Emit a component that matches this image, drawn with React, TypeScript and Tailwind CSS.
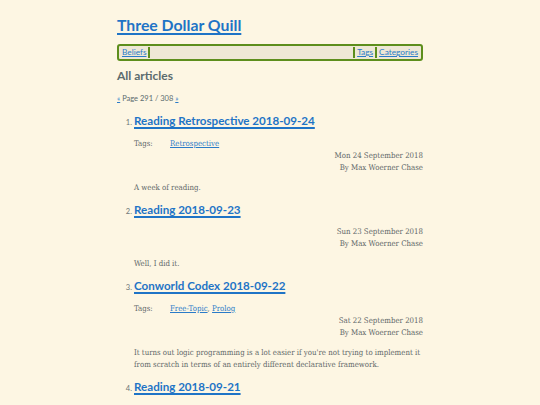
import React from "react";

const head = { fontFamily: "Lato, 'Open Sans', sans-serif" };
const body = { fontFamily: "'DejaVu Serif', 'Liberation Serif', serif" };

type Item = {
  n: number;
  title: string;
  tags?: string[];
  date?: string;
  text: string[];
};

const items: Item[] = [
  { n: 1, title: "Reading Retrospective 2018-09-24", tags: ["Retrospective"], date: "Mon 24 September 2018", text: ["A week of reading."] },
  { n: 2, title: "Reading 2018-09-23", date: "Sun 23 September 2018", text: ["Well, I did it."] },
  {
    n: 3,
    title: "Conworld Codex 2018-09-22",
    tags: ["Free-Topic", "Prolog"],
    date: "Sat 22 September 2018",
    text: [
      "It turns out logic programming is a lot easier if you're not trying to implement it",
      "from scratch in terms of an entirely different declarative framework.",
    ],
  },
  { n: 4, title: "Reading 2018-09-21", text: [] },
];

export default function App() {
  return (
    <div className="h-[405px] w-full bg-[#fdf6e3] overflow-hidden">
      <div className="w-[306px] mx-auto pt-[14px]">
        <h1 className="text-[15.8px] leading-[22px] font-bold" style={head}>
          <a href="#" className="text-[#1f74c6] underline decoration-[1.5px] underline-offset-[2px]">Three Dollar Quill</a>
        </h1>
        <nav
          className="mt-[8px] h-[17px] border-2 border-[#5d8e1c] rounded-[3px] bg-[#eee8d5] flex items-center px-[3px] text-[8.3px] leading-[11px]"
          style={head}
        >
          <a href="#" className="text-[#2a7bc8] underline">Beliefs</a>
          <span className="w-[2px] h-[11px] bg-[#5d8e1c] ml-[2px]" />
          <span className="flex-1" />
          <span className="w-[2px] h-[11px] bg-[#5d8e1c] mr-[2px]" />
          <a href="#" className="text-[#2a7bc8] underline">Tags</a>
          <span className="w-[2px] h-[11px] bg-[#5d8e1c] mx-[2px]" />
          <a href="#" className="text-[#2a7bc8] underline">Categories</a>
        </nav>
        <h2 className="mt-[7px] text-[12px] leading-[16px] font-bold text-[#5b6b6e]" style={head}>All articles</h2>
        <div className="mt-[9px] text-[7.5px] leading-[12px] text-[#5b6b6e]" style={head}>
          <a href="#" className="text-[#2a7bc8] underline">«</a> Page 291 / 308{" "}
          <a href="#" className="text-[#2a7bc8] underline">»</a>
        </div>
        <div className="mt-[8px]">
          {items.map((it) => (
            <div key={it.n} className="mb-[8px]">
              <div className="flex items-baseline">
                <span className="w-[17px] text-right pr-[2px] text-[7.5px] text-[#6b7475]" style={head}>{it.n}.</span>
                <a
                  href="#"
                  className="text-[11.6px] leading-[16px] font-bold text-[#1f74c6] underline decoration-[1.5px] underline-offset-[2px]"
                  style={head}
                >
                  {it.title}
                </a>
              </div>
              <div className="pl-[17px] text-[#5f6869] font-stretch-condensed" style={body}>
                {it.tags && (
                  <div className="mt-[9px] flex text-[7.8px] leading-[12px]">
                    <span className="w-[36px]">Tags:</span>
                    <span>
                      {it.tags.map((t, i) => (
                        <React.Fragment key={t}>
                          {i > 0 && ", "}
                          <a href="#" className="text-[#2a7bc8] underline">{t}</a>
                        </React.Fragment>
                      ))}
                    </span>
                  </div>
                )}
                {it.date && (
                  <div className={`${it.tags ? "" : "mt-[8px]"} text-right text-[7.8px] leading-[12px]`}>
                    <div>{it.date}</div>
                    <div>By Max Woerner Chase</div>
                  </div>
                )}
                {it.text.length > 0 && (
                  <div className="mt-[8px] text-[7.8px] leading-[12px]">
                    {it.text.map((l) => (
                      <div key={l} className="whitespace-nowrap">{l}</div>
                    ))}
                  </div>
                )}
              </div>
            </div>
          ))}
        </div>
      </div>
    </div>
  );
}
